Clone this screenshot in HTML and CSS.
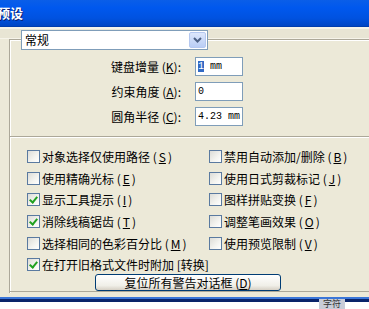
FILE: index.html
```html
<!DOCTYPE html>
<html lang="zh-CN">
<head>
    <meta charset="UTF-8">
    <title>预设</title>
    <link rel="stylesheet" href="styles.css">
</head>
<body>
    <div class="titlebar"><span class="title">预设</span></div>
    <div class="dialog">
        <div class="stripe"></div>
        <div class="frame">
            <div class="combo">
                <span class="combo-text">常规</span>
                <span class="combo-btn">
                    <svg width="9" height="6" viewBox="0 0 9 6"><path d="M1 1 L4.5 4.5 L8 1" fill="none" stroke="#4d6185" stroke-width="2"/></svg>
                </span>
            </div>
            <div class="fields">
                <div class="field">
                    <label>键盘增量 (<u>K</u>):</label>
                    <div class="input"><span class="sel">1</span> mm</div>
                </div>
                <div class="field">
                    <label>约束角度 (<u>A</u>):</label>
                    <div class="input">0</div>
                </div>
                <div class="field">
                    <label>圆角半径 (<u>C</u>):</label>
                    <div class="input">4.23 mm</div>
                </div>
            </div>
            <div class="options">
                <div class="checks">
                    <div class="check"><span class="box"></span>对象选择仅使用路径 (<u>S</u>)</div>
                    <div class="check"><span class="box"></span>禁用自动添加/删除 (<u>B</u>)</div>
                    <div class="check"><span class="box"></span>使用精确光标 (<u>E</u>)</div>
                    <div class="check"><span class="box"></span>使用日式剪裁标记 (<u>J</u>)</div>
                    <div class="check"><span class="box on"></span>显示工具提示 (<u>I</u>)</div>
                    <div class="check"><span class="box"></span>图样拼贴变换 (<u>F</u>)</div>
                    <div class="check"><span class="box on"></span>消除线稿锯齿 (<u>T</u>)</div>
                    <div class="check"><span class="box"></span>调整笔画效果 (<u>O</u>)</div>
                    <div class="check"><span class="box"></span>选择相同的色彩百分比 (<u>M</u>)</div>
                    <div class="check"><span class="box"></span>使用预览限制 (<u>V</u>)</div>
                    <div class="check wide"><span class="box on"></span>在打开旧格式文件时附加 [转换]</div>
                </div>
                <div class="reset-row">
                    <button class="reset">复位所有警告对话框 (<u>D</u>)</button>
                </div>
            </div>
        </div>
    </div>
    <div class="taskbar">
        <span class="tray">字符</span>
    </div>
</body>
</html>
```

FILE: styles.css
```css
* {
    margin: 0;
    padding: 0;
    box-sizing: border-box;
}

body {
    width: 369px;
    height: 309px;
    overflow: hidden;
    background: #ece9d8;
    font-family: "Noto Sans CJK SC", "DejaVu Sans", sans-serif;
    font-size: 12px;
    color: #000;
}

u {
    text-decoration: underline;
}

.titlebar {
    height: 27px;
    background: linear-gradient(#0a5ee8 0%, #0058ee 30%, #0052e0 70%, #0046c4 100%);
    border-bottom: 1px solid #003dae;
}

.title {
    display: block;
    margin-left: -3px;
    padding-top: 3px;
    color: #fff;
    font-weight: bold;
    font-size: 13px;
    text-shadow: 1px 1px 0 #0a1e6e;
}

.dialog {
    height: 270px;
    padding-left: 9px;
}

.stripe {
    height: 12px;
    margin-left: -9px;
    border-top: 2px solid #f6f4ea;
    border-bottom: 1px solid #f6f4ea;
    background: #e8e5d4;
}

.frame {
    border-top: 1px solid #aca899;
    border-left: 1px solid #aca899;
    box-shadow: inset 1px 1px 0 #fff;
    height: 254px;
    width: 380px;
}

.combo {
    display: flex;
    width: 187px;
    height: 20px;
    margin: -10px 0 0 11px;
    background: #fff;
    border: 1px solid #7f9db9;
}

.combo-text {
    flex: 1;
    padding: 1px 0 0 3px;
    line-height: 16px;
}

.combo-btn {
    width: 17px;
    margin: 1px;
    display: flex;
    align-items: center;
    justify-content: center;
    background: linear-gradient(#dde7fb, #b9cdf5);
    border: 1px solid #b5c8f0;
    border-radius: 2px;
}

.fields {
    display: flex;
    flex-direction: column;
    gap: 6px;
    padding-top: 7px;
    height: 87px;
    border-bottom: 1px solid #aca899;
    box-shadow: 0 1px 0 #fff;
}

.field {
    display: flex;
    align-items: center;
    height: 19px;
}

.field label {
    width: 171px;
    text-align: right;
}

.input {
    width: 48px;
    height: 19px;
    margin-left: 14px;
    padding: 0 2px;
    background: #fff;
    border: 1px solid #7f9db9;
    font-family: "Liberation Mono", monospace;
    font-size: 10px;
    line-height: 17px;
    white-space: nowrap;
    overflow: hidden;
}

.sel {
    background: #316ac5;
    color: #fff;
}

.options {
    padding: 9px 0 0 17px;
    height: 155px;
    border-bottom: 1px solid #aca899;
}

.checks {
    display: grid;
    grid-template-columns: 182px 150px;
    grid-auto-rows: 21.6px;
}

.check {
    display: flex;
    align-items: center;
    gap: 2px;
    white-space: nowrap;
}

.check.wide {
    grid-column: span 2;
}

.box {
    width: 13px;
    height: 13px;
    border: 1px solid #5a7aa0;
    background: linear-gradient(135deg, #dcdcd7 0%, #f4f4f0 60%, #fff 100%);
    position: relative;
}

.box.on::after {
    content: "";
    position: absolute;
    left: 3px;
    top: 1px;
    width: 3px;
    height: 6px;
    border: solid #21a121;
    border-width: 0 2px 2px 0;
    transform: rotate(40deg);
}

.reset-row {
    padding-left: 68px;
    margin-top: -2px;
}

.reset {
    width: 186px;
    height: 17px;
    font-family: "Noto Sans CJK SC", sans-serif;
    font-size: 12px;
    line-height: 15px;
    background: linear-gradient(#fff, #f0efe8 70%, #d6d0c5);
    border: 1px solid #003c74;
    border-radius: 3px;
}

.taskbar {
    height: 12px;
    border-top: 2px solid #3a76d8;
    background: #fff;
    box-shadow: inset 0 3px 0 #0a246a;
    display: flex;
    justify-content: flex-end;
}

.tray {
    margin-right: 24px;
    padding: 0 4px;
    background: #c8ccd8;
    color: #333;
    font-size: 9px;
    line-height: 10px;
}
```
